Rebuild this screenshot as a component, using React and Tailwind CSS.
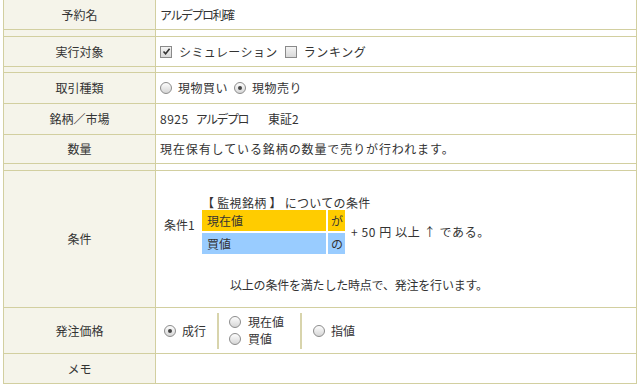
const font = { fontFamily: '"Noto Sans CJK JP", "Noto Sans", sans-serif' };

function CheckBox({ checked }) {
  return (
    <span className="inline-flex h-[12px] w-[12px] items-center justify-center border border-[#8a8a8a] bg-gradient-to-b from-[#f4f4f4] to-[#d8d8d8]">
      {checked && (
        <svg width="9" height="9" viewBox="0 0 9 9">
          <path d="M1.5 4.5 L3.6 6.8 L7.6 1.8" fill="none" stroke="#333" strokeWidth="1.6" />
        </svg>
      )}
    </span>
  );
}

function Radio({ checked }) {
  return (
    <span className="inline-flex h-[12px] w-[12px] shrink-0 items-center justify-center rounded-full border border-[#8c8c8c] bg-gradient-to-b from-[#fdfdfd] to-[#d6d6d6]">
      {checked && <span className="h-[4px] w-[4px] rounded-full bg-[#444]" />}
    </span>
  );
}

function Row({ label, h, children, className = '' }) {
  return (
    <div className="grid grid-cols-[152px_1fr] border-b border-[#d2cfa0]">
      <div
        className="flex items-center justify-center border-r border-[#d2cfa0] bg-[#f5f4ea] text-[12px] text-[#333]"
        style={{ height: h }}
      >
        {label}
      </div>
      <div className={'flex items-center pl-[4px] text-[12px] text-[#333] ' + className}>{children}</div>
    </div>
  );
}

function Spacer({ h }) {
  return (
    <div className="grid grid-cols-[152px_1fr] border-b border-[#d2cfa0]">
      <div className="border-r border-[#d2cfa0] bg-[#f5f4ea]" style={{ height: h }} />
      <div />
    </div>
  );
}

export default function App() {
  return (
    <div className="h-[388px] w-[640px] overflow-hidden bg-white pl-[3px]" style={font}>
      <div className="w-[634px] border-x border-[#d2cfa0]">
        <Row label="予約名" h={29}>
          <span className="tracking-[-1.5px]">アルデプロ利確</span>
        </Row>
        <Spacer h={6} />
        <Row label="実行対象" h={29}>
          <span className="flex items-center gap-[7px]">
            <CheckBox checked />
            <span className="tracking-[0.4px]">シミュレーション</span>
            <CheckBox />
            <span className="tracking-[0.6px]">ランキング</span>
          </span>
        </Row>
        <Spacer h={5} />
        <Row label="取引種類" h={30}>
          <span className="flex items-center gap-[6px]">
            <Radio />
            <span className="tracking-[0.5px]">現物買い</span>
            <Radio checked />
            <span className="tracking-[0.5px]">現物売り</span>
          </span>
        </Row>
        <Row label="銘柄／市場" h={30}>
          <span className="tracking-[0.5px]">8925</span>
          <span className="ml-[7px] tracking-[-1.5px]">アルデプロ</span>
          <span className="ml-[20px]">東証2</span>
        </Row>
        <Row label="数量" h={28}>
          <span className="tracking-[0.9px]">現在保有している銘柄の数量で売りが行われます。</span>
        </Row>
        <Spacer h={6} />
        <Row label="条件" h={136} className="flex-col items-start justify-start">
          <div className="mt-[24px] flex items-center pl-[4px]">
            <span className="w-[38px]">条件1</span>
            <div className="flex flex-col">
              <div className="h-[15px] leading-[15px] tracking-[0.3px]">【 監視銘柄 】 についての条件</div>
              <div className="flex items-center">
                <div className="grid grid-cols-[124px_17px] gap-[2px]">
                  <div className="h-[21px] bg-[#ffcc00] pl-[5px] leading-[21px]">現在値</div>
                  <div className="h-[21px] bg-[#ffcc00] pl-[3px] leading-[21px]">が</div>
                  <div className="h-[21px] bg-[#99ccff] pl-[5px] leading-[21px]">買値</div>
                  <div className="h-[21px] bg-[#99ccff] pl-[3px] leading-[21px]">の</div>
                </div>
                <span className="ml-[6px] tracking-[0.6px]">+ 50 円 以上 ↑ である。</span>
              </div>
            </div>
          </div>
          <div className="mt-[22px] pl-[70px] tracking-[-0.2px]">以上の条件を満たした時点で、発注を行います。</div>
        </Row>
        <Row label="発注価格" h={45}>
          <span className="ml-[4px] flex items-center gap-[6px]">
            <Radio checked />
            <span>成行</span>
          </span>
          <span className="ml-[11px] h-[36px] w-[2px] bg-[#d8d4ac]" />
          <span className="ml-[10px] flex flex-col">
            <span className="flex h-[17px] items-center gap-[7px]">
              <Radio />
              <span className="leading-[14px]">現在値</span>
            </span>
            <span className="flex h-[17px] items-center gap-[7px]">
              <Radio />
              <span className="leading-[14px]">買値</span>
            </span>
          </span>
          <span className="ml-[16px] h-[36px] w-[2px] bg-[#d8d4ac]" />
          <span className="ml-[11px] flex items-center gap-[6px]">
            <Radio />
            <span>指値</span>
          </span>
        </Row>
        <Row label="メモ" h={29} />
      </div>
    </div>
  );
}
